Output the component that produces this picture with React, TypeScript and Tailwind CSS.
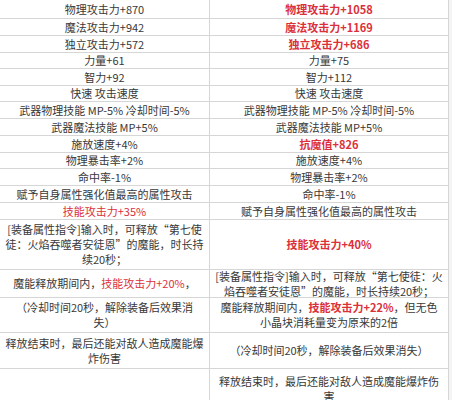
import type { ReactNode } from "react";

const Red = ({ children, bold }: { children: ReactNode; bold?: boolean }) => (
  <span className={bold ? "font-bold text-[#dc3039]" : "text-[#dc3039]"}>{children}</span>
);

type Row = { h: number; left: ReactNode; right: ReactNode };

const rows: Row[] = [
  { h: 19, left: "物理攻击力+870", right: <Red bold>物理攻击力+1058</Red> },
  { h: 17, left: "魔法攻击力+942", right: <Red bold>魔法攻击力+1169</Red> },
  { h: 17, left: "独立攻击力+572", right: <Red bold>独立攻击力+686</Red> },
  { h: 16, left: "力量+61", right: "力量+75" },
  { h: 17, left: "智力+92", right: "智力+112" },
  { h: 16, left: "快速 攻击速度", right: "快速 攻击速度" },
  { h: 17, left: "武器物理技能 MP-5% 冷却时间-5%", right: "武器物理技能 MP-5% 冷却时间-5%" },
  { h: 17, left: "武器魔法技能 MP+5%", right: "武器魔法技能 MP+5%" },
  { h: 17, left: "施放速度+4%", right: <Red bold>抗魔值+826</Red> },
  { h: 16, left: "物理暴击率+2%", right: "施放速度+4%" },
  { h: 17, left: "命中率-1%", right: "物理暴击率+2%" },
  { h: 17, left: "赋予自身属性强化值最高的属性攻击", right: "命中率-1%" },
  { h: 17, left: <Red>技能攻击力+35%</Red>, right: "赋予自身属性强化值最高的属性攻击" },
  {
    h: 50,
    left: (
      <>
        [装备属性指令]输入时，可释放“第七使
        <br />
        徒：火焰吞噬者安徒恩”的魔能，时长持
        <br />
        续20秒；
      </>
    ),
    right: <Red bold>技能攻击力+40%</Red>,
  },
  {
    h: 28,
    left: (
      <>
        魔能释放期间内，<Red>技能攻击力+20%</Red>，
      </>
    ),
    right: (
      <>
        [装备属性指令]输入时，可释放“第七使徒：火
        <br />
        焰吞噬者安徒恩”的魔能，时长持续20秒；
      </>
    ),
  },
  {
    h: 35,
    left: (
      <>
        （冷却时间20秒，解除装备后效果消
        <br />
        失）
      </>
    ),
    right: (
      <>
        魔能释放期间内，<Red bold>技能攻击力+22%</Red>，但无色
        <br />
        小晶块消耗量变为原来的2倍
      </>
    ),
  },
  {
    h: 36,
    left: (
      <>
        释放结束时，最后还能对敌人造成魔能爆
        <br />
        炸伤害
      </>
    ),
    right: "（冷却时间20秒，解除装备后效果消失）",
  },
  {
    h: 40,
    left: "",
    right: (
      <>
        释放结束时，最后还能对敌人造成魔能爆炸伤
        <br />
        害
      </>
    ),
  },
];

export default function App() {
  return (
    <div
      className="w-[452px] h-[400px] overflow-hidden bg-[#f3f5f3] text-[11px] leading-[15px] text-[#383838]"
      style={{ fontFamily: '"Noto Sans CJK SC", "Noto Sans", sans-serif' }}
    >
      <div className="grid w-[449px] grid-cols-[210px_239px] bg-white">
        {rows.map((r, i) => (
          <div key={i} className="contents">
            <div
              className="flex items-center justify-center whitespace-nowrap border-b border-r border-[#d6d6d6] px-1 text-center"
              style={{ height: r.h }}
            >
              <div>{r.left}</div>
            </div>
            <div
              className="flex items-center justify-center whitespace-nowrap border-b border-r border-[#d6d6d6] px-1 text-center"
              style={{ height: r.h }}
            >
              <div>{r.right}</div>
            </div>
          </div>
        ))}
      </div>
    </div>
  );
}
